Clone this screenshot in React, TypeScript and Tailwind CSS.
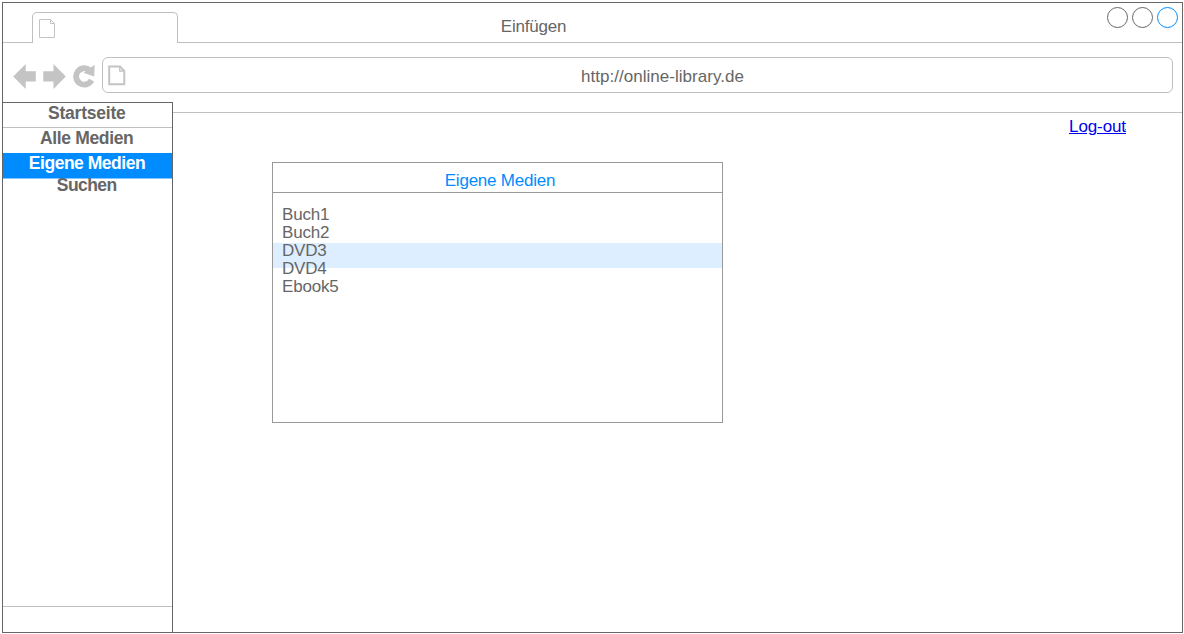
import React from "react";

const navItems = [
  { label: "Startseite", style: "h-[25px] border-b border-[#c0c0c0] text-[#666] leading-[21px] tracking-[-0.22px] pr-[1.5px]" },
  { label: "Alle Medien", style: "h-[25px] text-[#666] leading-[21px] tracking-[-0.35px] pr-[1.5px]" },
  { label: "Eigene Medien", style: "h-[26px] bg-[#008cff] border-b border-[#7fc5ff] text-white leading-[21px] tracking-[-0.48px] pr-px" },
  { label: "Suchen", style: "h-[25px] text-[#666] leading-[12px] tracking-[-0.55px] pr-[1.5px]" },
];

const media = ["Buch1", "Buch2", "DVD3", "DVD4", "Ebook5"];

function BackIcon() {
  return (
    <svg className="block" width="24" height="26" viewBox="0 0 24 26" fill="#c4c4c4">
      <path d="M0.2 12.5 12.7 0V7.3H22.8V17.5H12.7V25Z" />
    </svg>
  );
}

function ForwardIcon() {
  return (
    <svg className="block" width="24" height="26" viewBox="0 0 24 26" fill="#c4c4c4">
      <path d="M22.8 12.5 10.5 0V7.3H0.3V17.5H10.5V25Z" />
    </svg>
  );
}

function ReloadIcon() {
  return (
    <svg className="block" width="24" height="26" viewBox="0 0 24 26">
      <path d="M16.8 6.3A8.2 8.2 0 1 0 18.6 16.2" fill="none" stroke="#c4c4c4" strokeWidth="5.8" />
      <path d="M21.7 0.8 21.2 12.6 10.5 8.8Z" fill="#c4c4c4" />
    </svg>
  );
}

function PageIcon({ bold = false }: { bold?: boolean }) {
  return bold ? (
    <svg className="block" width="18" height="21" viewBox="0 0 18 21" fill="none" stroke="#c4c4c4">
      <path d="M1.2 1.5H12L16.3 5.8V19.3H1.2Z" strokeWidth="2" />
      <path d="M11.8 1.5V6H16.3" strokeWidth="1.4" />
    </svg>
  ) : (
    <svg className="block" width="17" height="20" viewBox="0 0 17 20" fill="none" stroke="#c4c4c4">
      <path d="M0.5 0.5H11.5L15.5 4.5V18.5H0.5Z" />
      <path d="M11.5 0.5V4.5H15.5" />
    </svg>
  );
}

export default function App() {
  return (
    <div className="h-[634px] w-[1184px] bg-white pt-[2px] pl-[2px] font-['Liberation_Sans',Arial,sans-serif] text-[17px] text-[#666]">
      <div className="flex h-[631px] w-[1181px] flex-col border border-[#666]">
        <header className="flex h-10 shrink-0 border-b border-[#c0c0c0]">
          <div className="mt-[9px] -mb-px ml-[29px] h-[31px] w-[146px] rounded-t-[5px] border border-b-0 border-[#c0c0c0] bg-white pt-[6px] pl-[6px]">
            <PageIcon />
          </div>
          <h1 className="ml-[322.8px] pt-[14px] leading-5 tracking-[-0.2px]">Einfügen</h1>
          <div className="mt-1 mr-1 ml-auto flex gap-1">
            <span className="size-[21px] rounded-full border border-[#666]" />
            <span className="size-[21px] rounded-full border border-[#666]" />
            <span className="size-[21px] rounded-full border border-[#008cff]" />
          </div>
        </header>

        <div className="flex h-[70px] shrink-0 border-b border-[#c0c0c0] pr-[9px] pl-[10px]">
          <div className="flex gap-[6px] pt-[21px]">
            <BackIcon />
            <ForwardIcon />
            <ReloadIcon />
          </div>
          <div className="mt-[14px] ml-[5px] flex h-9 flex-1 rounded-[6px] border border-[#c0c0c0] pl-[5px]">
            <div className="pt-[7px]">
              <PageIcon bold />
            </div>
            <span className="ml-[455px] pt-[9px] leading-5 tracking-[0.03px]">http://online-library.de</span>
          </div>
        </div>

        <div className="-mt-[11px] -mb-px flex flex-1">
          <aside className="relative -ml-px flex w-[171px] flex-col border border-[#666] bg-white">
            <nav className="text-center text-[17.5px] font-bold">
              {navItems.map((item) => (
                <div key={item.label} className={item.style}>
                  {item.label}
                </div>
              ))}
            </nav>
            <div className="mt-auto h-[26px] border-t border-[#c0c0c0]" />
          </aside>

          <main className="flex flex-1 items-start justify-between pl-[99px]">
            <section className="mt-[60px] h-[261px] w-[451px] border border-[#999]">
              <h2 className="h-[30px] border-b border-[#999] pt-[8px] pl-[5px] text-center leading-5 tracking-[-0.22px] text-[#008cff]">
                Eigene Medien
              </h2>
              <div className="relative pt-[13px] pl-[9px]">
                <div className="absolute inset-x-0 top-[50px] h-[25px] bg-[#dceeff]" />
                <ul className="relative">
                  {media.map((title) => (
                    <li key={title} className="leading-[18px] tracking-[-0.2px]">
                      {title}
                    </li>
                  ))}
                </ul>
              </div>
            </section>
            <a href="#" className="relative mt-[15px] mr-14 leading-5 tracking-[-0.1px] text-[#0000ee] underline">
              Log-out
              <span className="absolute top-[12px] right-0 size-px bg-[#6666b0]" />
            </a>
          </main>
        </div>
      </div>
    </div>
  );
}
